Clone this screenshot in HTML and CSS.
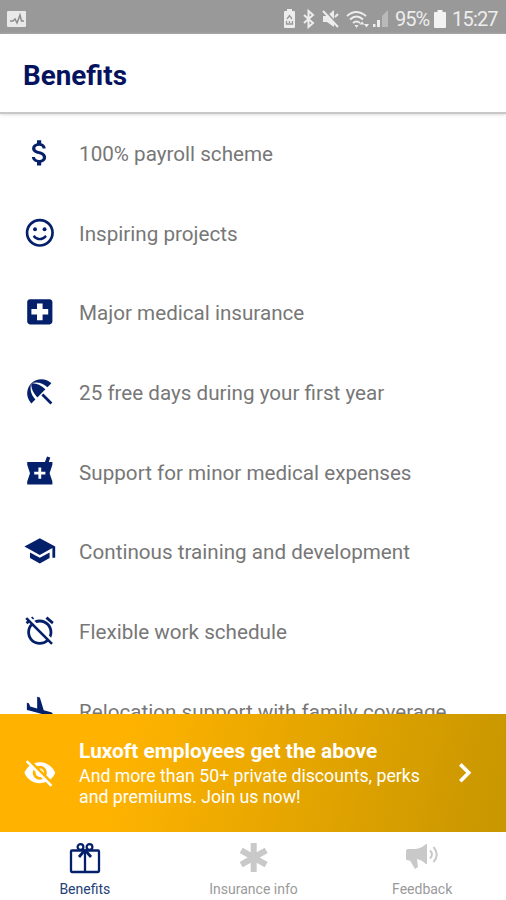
FILE: index.html
```html
<!DOCTYPE html>
<html lang="en">
<head>
<meta charset="utf-8">
<title>Benefits</title>
<link rel="stylesheet" href="styles.css">
</head>
<body>
<div class="screen">
  <div class="status">
    <svg class="status-app" width="19" height="16" viewBox="0 0 19 16"><rect width="19" height="16" rx="1" fill="#e9e9e9"/><path d="M3 10h3l2-2 2 4 3-8 1.500 6H17" fill="none" stroke="#8c8c8c" stroke-width="1.500"/></svg>
    <svg class="status-icons" width="110" height="24" viewBox="0 0 110 24">
      <path fill="#ededed" d="M4 5q0-1 1-1h2V2h5v2h2q1 0 1 1v15q0 1-1 1H5q-1 0-1-1z"/>
      <path d="M7 12l2.500-3.500L12 12M6.500 14v3h6v-3M9.500 14v2" fill="none" stroke="#999" stroke-width="1.300"/>
      <path d="M24 8l9 8-4.500 4V4L33 8l-9 8" fill="none" stroke="#ededed" stroke-width="2"/>
      <path fill="#ededed" d="M43 9h4l7-6v17l-7-5h-4z"/>
      <path d="M44 3l15 16" stroke="#999" stroke-width="2"/><path d="M43 4l15 16M55 10l3-3" stroke="#ededed" stroke-width="2"/>
      <path d="M67 9q9-8 19 0M70 12.500q6.500-6 13 0M73 16q3.500-3 7 0" fill="none" stroke="#ededed" stroke-width="2"/>
      <path fill="#ededed" d="M74.500 18h4L76.500 21zM79.500 17.500l2.500-3 2.500 3zM84 17h5l-2.500 3.500zM93 17h2.500v3H93zM97 13h3v7h-3z"/>
      <path fill="#b9b9b9" d="M102 9l6-6v17h-6z"/>
    </svg>
    <span class="status-pct">95%</span>
    <svg class="status-bat" width="12" height="18" viewBox="0 0 12 18"><path fill="#f2f2f2" d="M1 2h2.500V0h5v2H11q1 0 1 1v14q0 1-1 1H1q-1 0-1-1V3q0-1 1-1z"/></svg>
    <span class="status-time">15:27</span>
  </div>
  <header class="header"><h1>Benefits</h1></header>
  <main class="list">
    <div class="row"><svg class="icon" viewBox="0 0 24 24"><path d="M11.800 10.900c-2.270-.59-3-1.200-3-2.150 0-1.090 1.010-1.850 2.700-1.850 1.780 0 2.440.85 2.500 2.100h2.210c-.07-1.720-1.120-3.300-3.210-3.810V3h-3v2.160c-1.940.42-3.500 1.680-3.500 3.610 0 2.310 1.910 3.460 4.700 4.130 2.500.6 3 1.480 3 2.410 0 .69-.49 1.790-2.700 1.790-2.060 0-2.870-.92-2.980-2.100h-2.200c.12 2.190 1.760 3.420 3.680 3.830V21h3v-2.150c1.950-.37 3.500-1.500 3.500-3.550 0-2.840-2.430-3.810-4.700-4.400z"/></svg><span>100% payroll scheme</span></div>
    <div class="row"><svg class="icon" viewBox="0 0 24 24"><circle cx="12" cy="12" r="9.100" fill="none" stroke="#05206b" stroke-width="1.900"/><circle cx="8.600" cy="9.500" r="1.400"/><circle cx="15.400" cy="9.500" r="1.400"/><path d="M7.500 14.200Q12 19 16.500 14.200" fill="none" stroke="#05206b" stroke-width="1.600"/></svg><span>Inspiring projects</span></div>
    <div class="row"><svg class="icon" viewBox="0 0 24 24"><path d="M19 3H5c-1.100 0-1.990.9-1.990 2L3 19c0 1.100.9 2 2 2h14c1.100 0 2-.9 2-2V5c0-1.100-.9-2-2-2zm-1 11h-4v4h-4v-4H6v-4h4V6h4v4h4v4z"/></svg><span>Major medical insurance</span></div>
    <div class="row"><svg class="icon" viewBox="0 0 24 24"><path d="M13.127 14.560l1.430-1.430 6.440 6.443L19.570 21zm4.293-5.730l2.860-2.860c-3.950-3.950-10.350-3.960-14.300-.02 3.930-1.300 8.310-.25 11.440 2.880zM5.950 5.980c-3.940 3.950-3.930 10.350.02 14.300l2.860-2.860C5.700 14.290 4.650 9.910 5.950 5.980zm.02-.02l-.01.01c-.38 3.010 1.170 6.880 4.300 10.020l5.730-5.730c-3.130-3.130-7.010-4.680-10.020-4.300z"/></svg><span>25 free days during your first year</span></div>
    <div class="row"><svg class="icon" viewBox="0 0 24 24"><path d="M21 5h-2.640l1.140-3.140L17.150 1l-1.460 4H3v2l2 6-2 6v2h18v-2l-2-6 2-6V5zm-5 9h-3v3h-2v-3H8v-2h3V9h2v3h3v2z"/></svg><span>Support for minor medical expenses</span></div>
    <div class="row"><svg class="icon" viewBox="0 0 24 24"><path d="M5 13.180v4L12 21l7-3.820v-4L12 17l-7-3.820zM12 3L1 9l11 6 9-4.910V17h2V9L12 3z"/></svg><span>Continous training and development</span></div>
    <div class="row"><svg class="icon" viewBox="0 0 24 24"><path d="M12 6c3.870 0 7 3.130 7 7 0 .84-.16 1.650-.43 2.400l1.520 1.520c.58-1.190.91-2.510.91-3.920 0-4.970-4.030-9-9-9-1.410 0-2.730.33-3.920.91L9.600 6.430C10.350 6.160 11.160 6 12 6zm10-.28l-4.600-3.860-1.290 1.530 4.600 3.860L22 5.720zM2.920 2.290L1.650 3.570 2.980 4.900l-1.110.93 1.420 1.420 1.110-.94.8.8C3.830 8.690 3 10.750 3 13c0 4.970 4.020 9 9 9 2.250 0 4.310-.83 5.890-2.200l2.200 2.200 1.270-1.270L3.890 3.270l-.97-.98zm13.550 16.100C15.260 19.390 13.700 20 12 20c-3.870 0-7-3.130-7-7 0-1.700.61-3.260 1.610-4.470l9.860 9.860zM8.020 3.280L6.600 1.860l-.86.71 1.420 1.420.86-.71z"/></svg><span>Flexible work schedule</span></div>
    <div class="row"><svg class="icon" viewBox="0 0 24 24"><path d="M9.680 13.270l4.350 1.160 5.310 1.420c.8.210 1.620-.26 1.840-1.060.21-.8-.26-1.620-1.060-1.840l-5.310-1.420-2.760-9.020L10.120 2v8.280L5.150 8.950l-.93-2.320-1.450-.39v5.170l1.600.43 5.310 1.430zM2.500 19h19v2h-19z"/></svg><span>Relocation support with family coverage</span></div>
  </main>
  <section class="promo">
    <svg class="icon white" viewBox="0 0 24 24"><path d="M12 7c2.760 0 5 2.240 5 5 0 .65-.13 1.260-.36 1.830l2.920 2.920c1.510-1.260 2.700-2.890 3.430-4.750-1.730-4.390-6-7.500-11-7.500-1.400 0-2.740.25-3.980.7l2.160 2.160C10.740 7.130 11.350 7 12 7zM2 4.270l2.280 2.280.46.46C3.080 8.300 1.780 10.020 1 12c1.730 4.390 6 7.500 11 7.500 1.550 0 3.030-.3 4.380-.84l.42.42L19.730 22 21 20.730 3.270 3 2 4.270zM7.530 9.800l1.550 1.550c-.05.21-.08.43-.08.65 0 1.660 1.340 3 3 3 .22 0 .44-.03.65-.08l1.550 1.550c-.67.33-1.410.53-2.200.53-2.760 0-5-2.240-5-5 0-.79.2-1.530.53-2.200zm4.310-.78l3.150 3.150.02-.16c0-1.660-1.340-3-3-3l-.17.01z"/></svg>
    <div class="promo-text"><h2>Luxoft employees get the above</h2><p>And more than 50+ private discounts, perks<br>and premiums. Join us now!</p></div>
    <svg class="icon white" viewBox="0 0 24 24"><path d="M8.800 6l6 6-6 6" fill="none" stroke="#fff" stroke-width="2.600"/></svg>
  </section>
  <nav class="nav">
    <div class="tab active"><svg width="32" height="32" viewBox="0 0 32 32" fill="none" stroke="#05206b"><rect x="2" y="8.500" width="28" height="21.500" rx="1" stroke-width="2.300"/><path d="M16 10v20" stroke-width="2.300"/><circle cx="11.500" cy="5" r="2.900" stroke-width="2.200"/><circle cx="20.500" cy="5" r="2.900" stroke-width="2.200"/><path d="M13 7.500l3 2 3-2M16 8l-6 7M16 8l6 7" stroke-width="2.800"/></svg><span>Benefits</span></div>
    <div class="tab"><svg width="32" height="32" viewBox="0 0 32 32"><path d="M15.700 1v29M3.200 8.300l25 14.400M28.200 8.300L3.200 22.700" stroke="#c9c9c9" stroke-width="6"/></svg><span>Insurance info</span></div>
    <div class="tab"><svg width="34" height="32" viewBox="0 0 34 32"><path fill="#c9c9c9" d="M1 9q0-2 2-2h8q6-1 10-5h1v20h-1q-4-4-9-5l1 8-3 2-5-8.500H3q-2 0-2-2z"/><path d="M25 8.500q4 3.500 0 8M28.500 5q6.500 7.500 0 15" fill="none" stroke="#c9c9c9" stroke-width="2"/></svg><span>Feedback</span></div>
  </nav>
</div>
</body>
</html>
```
FILE: styles.css
```css
* { box-sizing: border-box; margin: 0; padding: 0; }
body { font-family: Roboto, "Liberation Sans", sans-serif; background: #fff; }
svg { display: block; flex: none; }
.screen { width: 506px; height: 900px; display: flex; flex-direction: column; overflow: hidden; }
.status { height: 34px; flex: none; background: #999; display: flex; align-items: center; padding: 3px 8px 0 7px; color: #ededed; font-size: 20px; white-space: nowrap; }
.status-icons { margin-left: 254px; }
.status-pct { width: 36px; margin-left: 5px; letter-spacing: -1px; }
.status-bat { margin-left: 3px; }
.status-time { margin-left: 6px; letter-spacing: -.8px; }
.header { height: 80px; flex: none; border-bottom: 2px solid #c8c8c8; box-shadow: 0 1px 3px #ddd; padding: 5px 23px 0; display: flex; align-items: center; }
h1 { font-size: 27.800px; font-weight: 700; color: #05135f; }
.list { flex: 1; min-height: 0; overflow: hidden; }
.row { height: 79.7px; display: flex; align-items: center; padding-left: 23px; gap: 22.500px; font-size: 20.630px; color: #777; white-space: nowrap; }
.icon { width: 33.600px; height: 33.600px; fill: #05206b; }
.row .icon { margin-top: -2px; }
.promo { height: 118px; flex: none; display: flex; align-items: center; padding: 0 24px 0 23px; gap: 22.500px; color: #fff; background: linear-gradient(105deg, #ffb300 0%, #ffb300 24%, #c99700 97%); white-space: nowrap; }
.promo .white { fill: #fff; }
.promo-text { flex: 1; min-width: 0; }
h2 { font-size: 20.850px; line-height: 27px; font-weight: 700; margin-bottom: 1px; }
p { font-size: 17.700px; line-height: 21px; }
.nav { height: 68px; flex: none; display: flex; background: #fff; }
.tab { flex: 1; display: flex; flex-direction: column; align-items: center; padding: 10px 0 0 1px; gap: 6px; font-size: 14px; line-height: 18px; color: #9a9a9a; }
.active { color: #244078; }
```
